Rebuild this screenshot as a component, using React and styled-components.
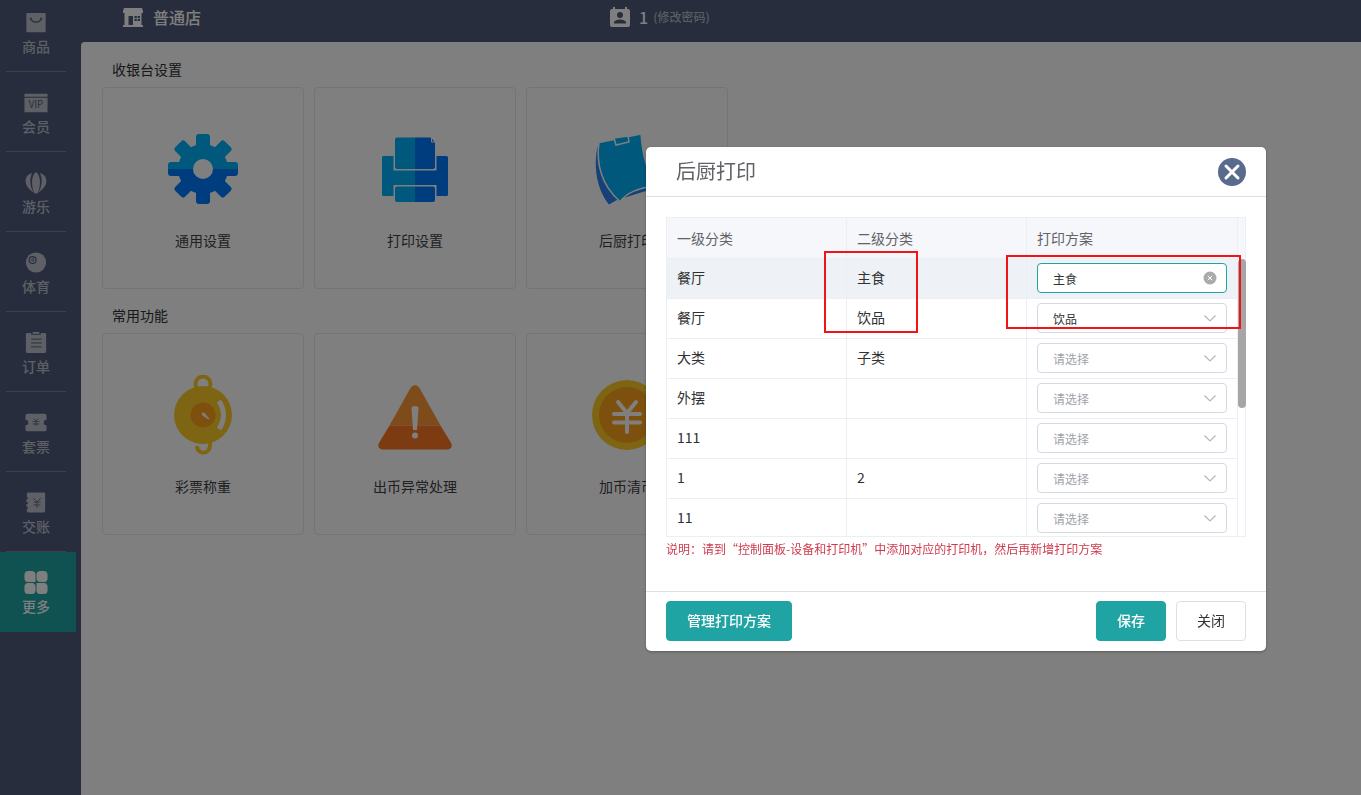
import React, { useState } from 'react';
import styled, { createGlobalStyle, css } from 'styled-components';

const GlobalStyle = createGlobalStyle`
  *, *::before, *::after {
    box-sizing: border-box;
  }

  html, body {
    margin: 0;
    overflow: hidden;
  }

  body, button, select {
    font-family: 'Noto Sans CJK SC', 'Noto Sans', sans-serif;
    font-size: 14px;
    color: #303133;
  }

  h1, h2, p {
    margin: 0;
    font-weight: 400;
  }
`;

/* page */

const Shell = styled.div`
  display: flex;
  height: calc(100vh + 8px);
  margin-top: -8px;
  background: #4f5b7b;
`;

const Sidebar = styled.nav`
  flex: 0 0 81px;
  padding-right: 5px;
`;

const NavLink = styled.a`
  display: flex;
  flex-direction: column;
  align-items: center;
  height: 80px;
  padding: 18px 4px 0 0;
  color: ${p => (p.$active ? '#fff' : '#bcc0cc')};
  background: ${p => (p.$active ? '#20a3a3' : 'transparent')};
  font-weight: 500;
  line-height: 20px;
  text-decoration: none;

  svg {
    display: block;
    margin-bottom: 1px;
  }

  &::after {
    content: '';
    width: 60px;
    height: 1px;
    margin-top: 15px;
    background: ${p => (p.$active ? 'transparent' : '#7a839d')};
  }
`;

const Main = styled.div`
  flex: 1;
  display: flex;
  flex-direction: column;
  min-width: 0;
`;

const TopBar = styled.header`
  display: grid;
  grid-template-columns: 37fr 57fr;
  align-items: center;
  height: 50px;
  padding: 0 0 1px 40px;
  color: #fff;
`;

const TopItem = styled.div`
  display: flex;
  align-items: center;
  gap: 8px;
  font-size: 16px;
  font-weight: 500;
`;

const PasswordLink = styled.a`
  margin-left: -3px;
  color: #b4b9c6;
  font-size: 12px;
  text-decoration: none;
`;

const Content = styled.main`
  flex: 1;
  padding: 15px 21px;
  background: #fff;
  border-top-left-radius: 4px;
`;

const Section = styled.section`
  margin-bottom: 14px;
`;

const SectionTitle = styled.h2`
  padding-left: 10px;
  margin-bottom: 6px;
  font-size: 14px;
  line-height: 24px;
`;

const Cards = styled.div`
  display: flex;
  flex-wrap: wrap;
  gap: 10px;
`;

const Card = styled.button`
  display: flex;
  flex-direction: column;
  align-items: center;
  width: 202px;
  height: 202px;
  padding: 41px 0 0;
  color: #3f4144;
  background: #fff;
  border: 1px solid #e8e8ec;
  border-radius: 4px;

  svg {
    display: block;
    margin-bottom: 21px;
  }
`;

/* dialog */

const Overlay = styled.div`
  position: fixed;
  inset: 0;
  display: flex;
  justify-content: flex-end;
  align-items: flex-start;
  padding: 147px 95px 20px 20px;
  background: rgba(0, 0, 0, 0.5);
  overflow: auto;
`;

const Dialog = styled.div`
  position: relative;
  width: 620px;
  background: #fff;
  border-radius: 5px;
  box-shadow: 0 1px 3px rgba(0, 0, 0, 0.3);
`;

const DialogHeader = styled.div`
  display: flex;
  align-items: center;
  justify-content: space-between;
  height: 50px;
  padding: 0 20px 0 30px;
  border-bottom: 1px solid #dcdfe6;
`;

const DialogTitle = styled.h1`
  padding-bottom: 2px;
  color: #606266;
  font-size: 20px;
`;

const CloseButton = styled.button`
  width: 28px;
  height: 28px;
  padding: 0;
  background: none;
  border: 0;

  svg {
    display: block;
  }
`;

const DialogBody = styled.div`
  padding: 20px 20px 32px;
`;

const DialogFooter = styled.div`
  display: flex;
  gap: 10px;
  padding: 9px 20px 10px;
  border-top: 1px solid #dcdfe6;
`;

const Button = styled.button`
  height: 40px;
  padding: 0 20px 2px;
  color: #303133;
  background: #fff;
  border: 1px solid #dcdfe6;
  border-radius: 4px;

  ${p =>
    p.$primary &&
    css`
      color: #fff;
      background: #20a3a3;
      border-color: #20a3a3;
      font-weight: 500;
    `}

  &:first-child {
    margin-right: auto;
  }
`;

const TableFrame = styled.div`
  display: flex;
  height: 320px;
  border: 1px solid #ebeef5;
  border-right: 0;
  overflow: hidden;
`;

const Table = styled.table`
  flex: 1;
  display: table;
  table-layout: fixed;
  height: max-content;
  border-collapse: separate;
  border-spacing: 0;
  text-align: left;
`;

const Th = styled.th`
  width: ${p => p.$width || 'auto'};
  height: 41px;
  padding: 0 10px 1px;
  color: #606266;
  background: #f5f7fa;
  border-right: 1px solid #ebeef5;
  border-bottom: 1px solid #ebeef5;
  font-weight: 400;
`;

const Td = styled.td`
  height: 40px;
  padding: 0 10px 3px;
  border-right: 1px solid #ebeef5;
  border-bottom: 1px solid #ebeef5;
  line-height: 20px;
`;

const PlanTd = styled(Td)`
  padding-bottom: 1px;
`;

const Row = styled.tr`
  background: ${p => (p.$active ? '#eef1f6' : '#fff')};
`;

const ScrollTrack = styled.div`
  flex: 0 0 8px;
  box-shadow: inset -1px 0 #ebeef5;

  &::before {
    content: '';
    display: block;
    height: 41px;
    background: #f5f7fa;
    border-right: 1px solid #ebeef5;
  }
`;

const ScrollThumb = styled.div`
  width: 8px;
  height: 149px;
  background: #a6a6a6;
  border-radius: 4px;
`;

const SelectBox = styled.div`
  position: relative;
  height: 30px;
`;

const Select = styled.select`
  appearance: none;
  display: block;
  width: 100%;
  height: 30px;
  padding: 0 30px 0 15px;
  color: ${p => (p.$empty ? '#a0a3a9' : '#303133')};
  background: #fff;
  border: 1px solid ${p => (p.$active ? '#20a3a3' : '#d5d8df')};
  border-radius: 4px;
  font-size: 12px;
  outline: none;
`;

const Suffix = styled.span`
  position: absolute;
  top: 8px;
  right: 10px;
  pointer-events: none;

  svg {
    display: block;
  }
`;

const ClearButton = styled(Suffix).attrs({ as: 'button' })`
  padding: 0;
  background: none;
  border: 0;
  pointer-events: auto;
`;

const Note = styled.p`
  padding-top: 2px;
  color: #cf3a4e;
  font-size: 12px;
  line-height: 20px;
`;

const Highlight = styled.div`
  position: absolute;
  top: ${p => p.$top}px;
  left: ${p => p.$left}px;
  width: ${p => p.$width}px;
  height: ${p => p.$height}px;
  border: 2px solid #f01414;
  pointer-events: none;
`;

/* sidebar icons */

const NavSvg = ({ children }) => (
  <svg width="26" height="26" viewBox="0 0 26 26" fill="currentColor" aria-hidden="true">
    {children}
  </svg>
);

const GoodsIcon = () => (
  <NavSvg>
    <rect x="3" y="3" width="20" height="20" rx="1" />
    <path d="M7.500 8.500c1 5.500 10 5.500 11 0" fill="none" stroke="#4f5b7b" strokeWidth="1.200" />
    <circle cx="7.500" cy="8.700" r="1" fill="#4f5b7b" />
    <circle cx="18.500" cy="8.700" r="1" fill="#4f5b7b" />
  </NavSvg>
);

const VipIcon = () => (
  <NavSvg>
    <path d="M1 4h24v3H1zM1 8h24v15H1z" />
    <text x="13" y="18.500" fontSize="10" fontWeight="400" textAnchor="middle" fill="#4f5b7b">
      VIP
    </text>
  </NavSvg>
);

const BalloonIcon = () => (
  <NavSvg>
    <path d="M9 3C4 4.500 2 8 2.200 12c.4 5 4 8.500 8.300 11.500C6.500 16 6 9 9 3z" />
    <path d="M17 3c5 1.500 7 5 6.800 9-.4 5-4 8.500-8.300 11.500C19.500 16 20 9 17 3z" />
    <path d="M13 2c5.500 4 5 15.500 1.500 22.500h-3C8 17.500 7.500 6 13 2z" />
  </NavSvg>
);

const BallIcon = () => (
  <NavSvg>
    <circle cx="13" cy="13" r="10.500" />
    <circle cx="9.500" cy="10.500" r="3.600" fill="none" stroke="#4f5b7b" strokeWidth="1.200" />
    <path d="M11 9.200c-2.500-1-3.500 2-1.500 2.500 1.500.2 2-1.500.5-1.500" fill="none" stroke="#4f5b7b" />
  </NavSvg>
);

const OrderIcon = () => (
  <NavSvg>
    <path d="M4 3h4v2h10V3h4a1.500 1.500 0 0 1 1.500 1.500v18A1.500 1.500 0 0 1 22 24H4a1.500 1.500 0 0 1-1.500-1.500v-18A1.500 1.500 0 0 1 4 3z" />
    <path d="M9.500 2h7v2h-7z" />
    <path d="M8 9.500h11M8 13.500h11M8 17.500h11" stroke="#4f5b7b" />
  </NavSvg>
);

const TicketIcon = () => (
  <NavSvg>
    <path d="M4 4h18a2 2 0 0 1 2 2v4a3 3 0 0 0 0 6v4a2 2 0 0 1-2 2H4a2 2 0 0 1-2-2v-4a3 3 0 0 0 0-6V6a2 2 0 0 1 2-2z" />
    <path d="M10.500 9l2.500 2.500L15.500 9M9.500 12h7M9.500 14.500h7M13 12v4.500" fill="none" stroke="#4f5b7b" strokeWidth=".8" />
  </NavSvg>
);

const LedgerIcon = () => (
  <NavSvg>
    <path d="M5 2.500h16A1.500 1.500 0 0 1 22.500 4v18a1.500 1.500 0 0 1-1.500 1.500H5A1.500 1.500 0 0 1 3.500 22v-2.500h1v-2H3v-3h1.500v-2H3v-3h1.500v-2h-1V4A1.500 1.500 0 0 1 5 2.500z" />
    <path d="M10 8.500l4 4 4-4M10.500 12.500h7M10.500 15.500h7M14 12.500v6" fill="none" stroke="#4f5b7b" strokeWidth=".8" />
  </NavSvg>
);

const MoreIcon = () => (
  <NavSvg>
    <path d="M5 1h4a4 4 0 0 1 3.500 4v7.500H5A4 4 0 0 1 1 9V5a4 4 0 0 1 4-4z" />
    <path d="M17 1h4a4 4 0 0 1 4 4v4a4 4 0 0 1-4 3.500h-4a4 4 0 0 1-3.500-3.500V5A4 4 0 0 1 17 1z" />
    <path d="M5 13.500h4a4 4 0 0 1 3.500 3.500v4A4 4 0 0 1 9 25H5a4 4 0 0 1-4-4v-4a4 4 0 0 1 4-3.500z" />
    <path d="M13.500 13.500H21a4 4 0 0 1 4 3.500v4a4 4 0 0 1-4 4h-4a4 4 0 0 1-3.500-4z" />
  </NavSvg>
);

/* top bar icons */

const StoreIcon = () => (
  <svg width="24" height="24" viewBox="0 0 24 24" aria-hidden="true">
    <path
      d="M3 3h18l1 3v2h-1.500v12H22v2H2v-2h1.500V8H2V6zM7.500 11v9H12v-9zM13.500 11v5H19v-5z"
      fill="#fff"
      fillRule="evenodd"
    />
    <path d="M16.250 11v5M13.500 13.500H19" stroke="#fff" strokeWidth=".8" />
  </svg>
);

const UserIcon = () => (
  <svg width="22" height="24" viewBox="0 0 22 24" aria-hidden="true">
    <path
      d="M3 4h1V2h2v2h10V2h2v2h1a2 2 0 0 1 2 2v14a2 2 0 0 1-2 2H3a2 2 0 0 1-2-2V6a2 2 0 0 1 2-2z"
      fill="#fff"
    />
    <circle cx="11" cy="10" r="3" fill="#4f5b7b" />
    <path d="M5 18.500v-1c0-2 4-3 6-3s6 1 6 3v1z" fill="#4f5b7b" />
  </svg>
);

/* card icons */

const CardSvg = ({ children }) => (
  <svg width="80" height="80" viewBox="0 0 80 80" aria-hidden="true">
    {children}
  </svg>
);

const TEETH = [0, 45, 90, 135];

const GearIcon = () => (
  <CardSvg>
    <defs>
      <clipPath id="gear-top">
        <rect width="80" height="40" />
      </clipPath>
      <clipPath id="gear-bottom">
        <rect y="40" width="80" height="40" />
      </clipPath>
    </defs>
    {[
      ['gear-top', '#00b0f8'],
      ['gear-bottom', '#007bff'],
    ].map(([clip, color]) => (
      <g key={clip} clipPath={`url(#${clip})`} fill={color}>
        <circle cx="40" cy="40" r="25" />
        {TEETH.map(deg => (
          <rect
            key={deg}
            x="33"
            y="5"
            width="14"
            height="70"
            rx="3"
            transform={`rotate(${deg} 40 40)`}
          />
        ))}
      </g>
    ))}
    <circle cx="40" cy="40" r="10" fill="#fff" />
  </CardSvg>
);

const PrinterIcon = () => (
  <CardSvg>
    <path d="M8.500 27h10a1.500 1.500 0 0 1 1.500 1.500V41h20v16H20v8.500a1.500 1.500 0 0 1-1.500 1.500h-10A1.500 1.500 0 0 1 7 65.500v-37A1.500 1.500 0 0 1 8.500 27z" fill="#00b0f8" />
    <path d="M71.500 27h-10a1.500 1.500 0 0 0-1.500 1.500V41H40v16h20v8.500a1.500 1.500 0 0 0 1.500 1.500h10a1.500 1.500 0 0 0 1.500-1.500v-37a1.500 1.500 0 0 0-1.500-1.500z" fill="#007bff" />
    <path d="M18.500 8h43v33.500h-43zM18.500 56h43v18h-43z" fill="#fff" />
    <path d="M22 8.500h18v31.500H22a2 2 0 0 1-2-2V10.500a2 2 0 0 1 2-2zM22 57.500h18V73H22a2 2 0 0 1-2-2V59.500a2 2 0 0 1 2-2z" fill="#00b0f8" />
    <path d="M40 8.500h16l4 5V38a2 2 0 0 1-2 2H40zM40 57.500h18a2 2 0 0 1 2 2V71a2 2 0 0 1-2 2H40z" fill="#007bff" />
    <path d="M56.500 8.500v4.500H60" fill="none" stroke="#fff" />
  </CardSvg>
);

const KitchenIcon = () => (
  <CardSvg>
    <path d="M10.500 18C7 34 8 58 22 75.500l8-4.500 32-10z" fill="#2a80f0" />
    <path
      d="M12 13.500L54 5c2 24 6 40 18 50-14 4-29 5-39 17.500C14 56 9 34 12 13.500z"
      fill="#00b0f8"
      stroke="#fff"
      strokeWidth="1.500"
    />
    <path d="M27 9l14-2 1 6-13 3z" fill="#00b0f8" stroke="#fff" strokeWidth="1.500" />
  </CardSvg>
);

const ScaleIcon = () => (
  <CardSvg>
    <circle cx="40" cy="9" r="7.500" fill="none" stroke="#fccb27" strokeWidth="4" />
    <path d="M34 71c0 9 13 9 13-1v-4" fill="none" stroke="#fccb27" strokeWidth="4" />
    <circle cx="40" cy="40" r="29" fill="#fccb27" />
    <circle cx="40" cy="40" r="12.500" fill="#faa31b" />
    <path d="M56 26q9 14 0 28" fill="none" stroke="#fff" strokeWidth="5" />
    <path d="M38.500 37.500l3 .5 5 6-1 .5-6-4z" fill="#fff" />
  </CardSvg>
);

const WarningIcon = () => (
  <CardSvg>
    <path d="M35.500 13q4.500-6 9 0L65.500 50.500h-51z" fill="#fd9636" />
    <path d="M14.500 50.500h51l10 16.500c3 5 0 7.500-4 7.500H8.500c-4 0-7-2.500-4-7.500z" fill="#fb7622" />
    <path d="M36.500 33q0-2 3.500-2t3.500 2L42 55h-4z" fill="#fff" />
    <circle cx="40" cy="60.500" r="3" fill="#fff" />
  </CardSvg>
);

const CoinIcon = () => (
  <CardSvg>
    <circle cx="40" cy="40" r="35" fill="#fccb27" />
    <circle cx="40" cy="40" r="28" fill="#faa31b" />
    <path
      d="M31 27l9 11 9-11M27 39h26M27 47.500h26M40 38v19"
      fill="none"
      stroke="#fff"
      strokeWidth="4"
      strokeLinecap="round"
    />
  </CardSvg>
);

const ArrowIcon = () => (
  <svg width="14" height="14" viewBox="0 0 14 14" aria-hidden="true">
    <path d="M1.500 4.500L7 10l5.500-5.500" fill="none" stroke="#b4b7bd" strokeWidth="1.200" />
  </svg>
);

const ClearIcon = () => (
  <svg width="14" height="14" viewBox="0 0 14 14" aria-hidden="true">
    <circle cx="7" cy="7" r="6.500" fill="#aaaaab" />
    <path d="M4.800 4.800l4.400 4.400M9.200 4.800L4.800 9.200" stroke="#fff" />
  </svg>
);

const CloseIcon = () => (
  <svg width="28" height="28" viewBox="0 0 28 28" aria-hidden="true">
    <circle cx="14" cy="14" r="14" fill="#5a6a8e" />
    <path d="M8 8l12 12M20 8L8 20" stroke="#fff" strokeWidth="3" strokeLinecap="round" />
  </svg>
);

const NAV = [
  { label: '商品', icon: GoodsIcon },
  { label: '会员', icon: VipIcon },
  { label: '游乐', icon: BalloonIcon },
  { label: '体育', icon: BallIcon },
  { label: '订单', icon: OrderIcon },
  { label: '套票', icon: TicketIcon },
  { label: '交账', icon: LedgerIcon },
  { label: '更多', icon: MoreIcon, active: true },
];

const SECTIONS = [
  {
    title: '收银台设置',
    cards: [
      { label: '通用设置', icon: GearIcon },
      { label: '打印设置', icon: PrinterIcon },
      { label: '后厨打印', icon: KitchenIcon },
    ],
  },
  {
    title: '常用功能',
    cards: [
      { label: '彩票称重', icon: ScaleIcon },
      { label: '出币异常处理', icon: WarningIcon },
      { label: '加币清币', icon: CoinIcon },
    ],
  },
];

const ROWS = [
  { first: '餐厅', second: '主食', plan: '主食' },
  { first: '餐厅', second: '饮品', plan: '饮品' },
  { first: '大类', second: '子类', plan: '' },
  { first: '外摆', second: '', plan: '' },
  { first: '111', second: '', plan: '' },
  { first: '1', second: '2', plan: '' },
  { first: '11', second: '', plan: '' },
];

const PlanSelect = ({ label, value, active, onChange }) => (
  <SelectBox>
    <Select
      aria-label={label}
      value={value}
      $empty={!value}
      $active={active}
      onChange={e => onChange(e.target.value)}
    >
      <option value="">请选择</option>
      <option value="主食">主食</option>
      <option value="饮品">饮品</option>
    </Select>
    {active && value ? (
      <ClearButton type="button" aria-label="清空" onClick={() => onChange('')}>
        <ClearIcon />
      </ClearButton>
    ) : (
      <Suffix>
        <ArrowIcon />
      </Suffix>
    )}
  </SelectBox>
);

const PrintDialog = () => {
  const [rows, setRows] = useState(ROWS);

  const setPlan = (index, plan) => {
    setRows(rows.map((row, i) => (i === index ? { ...row, plan } : row)));
  };

  return (
    <Dialog role="dialog" aria-labelledby="dialog-title">
      <DialogHeader>
        <DialogTitle id="dialog-title">后厨打印</DialogTitle>
        <CloseButton type="button" aria-label="关闭窗口">
          <CloseIcon />
        </CloseButton>
      </DialogHeader>
      <DialogBody>
        <TableFrame>
          <Table>
            <thead>
              <tr>
                <Th $width="180px">一级分类</Th>
                <Th $width="180px">二级分类</Th>
                <Th>打印方案</Th>
              </tr>
            </thead>
            <tbody>
              {rows.map((row, i) => (
                <Row key={i} $active={i === 0}>
                  <Td>{row.first}</Td>
                  <Td>{row.second}</Td>
                  <PlanTd>
                    <PlanSelect
                      label={`打印方案 ${row.first} ${row.second}`}
                      value={row.plan}
                      active={i === 0}
                      onChange={plan => setPlan(i, plan)}
                    />
                  </PlanTd>
                </Row>
              ))}
            </tbody>
          </Table>
          <ScrollTrack>
            <ScrollThumb />
          </ScrollTrack>
        </TableFrame>
        <Note>说明：请到“控制面板-设备和打印机”中添加对应的打印机，然后再新增打印方案</Note>
      </DialogBody>
      <DialogFooter>
        <Button type="button" $primary>管理打印方案</Button>
        <Button type="button" $primary>保存</Button>
        <Button type="button">关闭</Button>
      </DialogFooter>
      <Highlight $top={104} $left={178} $width={94} $height={82} />
      <Highlight $top={108} $left={360} $width={235} $height={74} />
    </Dialog>
  );
};

const App = () => (
  <>
    <GlobalStyle />
    <Shell>
      <Sidebar>
        {NAV.map(({ label, icon: Icon, active }) => (
          <NavLink key={label} href="#" $active={active}>
            <Icon />
            {label}
          </NavLink>
        ))}
      </Sidebar>
      <Main>
        <TopBar>
          <TopItem>
            <StoreIcon />
            普通店
          </TopItem>
          <TopItem>
            <UserIcon />
            1 <PasswordLink href="#">(修改密码)</PasswordLink>
          </TopItem>
        </TopBar>
        <Content>
          {SECTIONS.map(section => (
            <Section key={section.title}>
              <SectionTitle>{section.title}</SectionTitle>
              <Cards>
                {section.cards.map(({ label, icon: Icon }) => (
                  <Card key={label} type="button">
                    <Icon />
                    {label}
                  </Card>
                ))}
              </Cards>
            </Section>
          ))}
        </Content>
      </Main>
    </Shell>
    <Overlay>
      <PrintDialog />
    </Overlay>
  </>
);

export default App;
